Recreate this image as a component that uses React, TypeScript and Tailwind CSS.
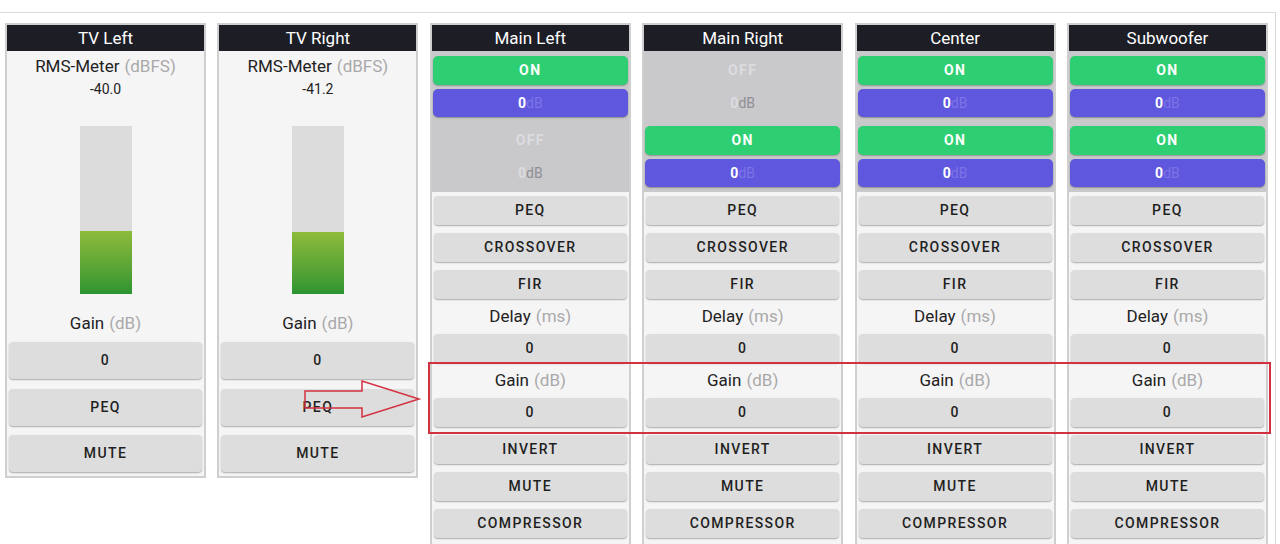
import React from "react";

type Route = { on: boolean };

type Channel = {
  name: string;
  routes: Route[];
};

const MAIN_CHANNELS: Channel[] = [
  { name: "Main Left", routes: [{ on: true }, { on: false }] },
  { name: "Main Right", routes: [{ on: false }, { on: true }] },
  { name: "Center", routes: [{ on: true }, { on: true }] },
  { name: "Subwoofer", routes: [{ on: true }, { on: true }] },
];

const INPUTS = [
  { name: "TV Left", level: "-40.0", fill: 63 },
  { name: "TV Right", level: "-41.2", fill: 62 },
];

const FONT = { fontFamily: "Roboto, 'Noto Sans', sans-serif" };

function Header({ name }: { name: string }) {
  return (
    <div className="flex h-[26px] items-center justify-center bg-[#1d1e25] text-[17px] leading-none text-white">
      {name}
    </div>
  );
}

function Button({ children, tall = false }: { children: React.ReactNode; tall?: boolean }) {
  return (
    <div
      className={`mx-[2px] flex items-center justify-center rounded-[4px] bg-[#dddddd] text-[14px] font-medium uppercase tracking-[0.1em] text-[#1f1f1f] shadow-[0_1px_1.5px_rgba(0,0,0,0.3)] ${
        tall ? "h-[37px]" : "h-[29px]"
      }`}
    >
      {children}
    </div>
  );
}

function Label({ title, unit, className = "" }: { title: string; unit: string; className?: string }) {
  return (
    <div className={`flex items-center justify-center text-[17px] text-[#222] ${className}`}>
      {title}
      <span className="ml-[5px] text-[#a9a9a9]">({unit})</span>
    </div>
  );
}

function RouteBlock({ on }: Route) {
  if (!on) {
    return (
      <div className="flex flex-col gap-[4px]">
        <div className="flex h-[29px] items-center justify-center text-[14px] font-bold tracking-[0.1em] text-[#dcdce0]">
          OFF
        </div>
        <div className="flex h-[28px] items-center justify-center text-[14px]">
          <span className="font-bold text-[#dcdce0]">0</span>
          <span className="text-[#8f8f94]">dB</span>
        </div>
      </div>
    );
  }
  return (
    <div className="flex flex-col gap-[4px]">
      <div className="flex h-[29px] items-center justify-center rounded-[5px] bg-[#2ecf72] text-[14px] font-bold tracking-[0.1em] text-white shadow-[0_1px_1.5px_rgba(0,0,0,0.25)]">
        ON
      </div>
      <div className="flex h-[28px] items-center justify-center rounded-[5px] bg-[#5f57de] text-[14px] shadow-[0_1px_1.5px_rgba(0,0,0,0.3)]">
        <span className="font-bold text-white">0</span>
        <span className="text-[#7b74e6]">dB</span>
      </div>
    </div>
  );
}

function InputPanel({ name, level, fill }: { name: string; level: string; fill: number }) {
  return (
    <div className="w-[201px] self-start border-2 border-[#cfcfcf] bg-[#f6f5f6] pb-[4px]">
      <Header name={name} />
      <Label title="RMS-Meter" unit="dBFS" className="h-[28px] pt-[4px]" />
      <div className="flex h-[20px] items-center justify-center text-[14px] text-[#222]">{level}</div>
      <div className="flex justify-center pt-[27px]">
        <div className="flex h-[168px] w-[52px] flex-col justify-end bg-[#dcdcdc]">
          <div
            className="w-full bg-gradient-to-b from-[#8dbb3c] to-[#2a9431]"
            style={{ height: `${fill}px` }}
          />
        </div>
      </div>
      <Label title="Gain" unit="dB" className="h-[48px] pt-[11px]" />
      <div className="flex flex-col gap-[9.5px]">
        <Button tall>0</Button>
        <Button tall>PEQ</Button>
        <Button tall>MUTE</Button>
      </div>
    </div>
  );
}

function OutputPanel({ channel }: { channel: Channel }) {
  return (
    <div className="w-[201px] border-2 border-b-0 border-[#cfcfcf] bg-[#f6f5f6]">
      <Header name={channel.name} />
      <div className="flex flex-col gap-[9px] bg-[#c9c9cc] px-[1px] pb-[5px] pt-[5px]">
        {channel.routes.map((route, index) => (
          <RouteBlock key={`${channel.name}-${index}`} on={route.on} />
        ))}
      </div>
      <div className="flex flex-col pt-[4px]">
        <div className="flex flex-col gap-[8px]">
          <Button>PEQ</Button>
          <Button>CROSSOVER</Button>
          <Button>FIR</Button>
        </div>
        <Label title="Delay" unit="ms" className="h-[35px]" />
        <Button>0</Button>
        <Label title="Gain" unit="dB" className="h-[35px]" />
        <Button>0</Button>
        <div className="mt-[8px] flex flex-col gap-[8px] pb-[8px]">
          <Button>INVERT</Button>
          <Button>MUTE</Button>
          <Button>COMPRESSOR</Button>
        </div>
      </div>
    </div>
  );
}

export default function App() {
  return (
    <div className="relative h-[544px] w-[1280px] overflow-hidden bg-white" style={FONT}>
      <div className="mt-[12px] w-[1276px] border-r border-t border-[#dadada] pl-[5px] pt-[10px]">
        <div className="flex items-start gap-[11.4px]">
          {INPUTS.map((input) => (
            <InputPanel key={input.name} {...input} />
          ))}
          {MAIN_CHANNELS.map((channel) => (
            <OutputPanel key={channel.name} channel={channel} />
          ))}
        </div>
      </div>

      {/* annotation overlay */}
      <div className="pointer-events-none absolute left-[428px] top-[362px] h-[72px] w-[843px] border-2 border-[#d2313f]" />
      <svg
        className="pointer-events-none absolute left-0 top-0"
        width="1280"
        height="544"
        viewBox="0 0 1280 544"
      >
        <polygon
          points="305,391 362,391 362,381 419,399 362,417 362,408 305,408"
          fill="none"
          stroke="#d2313f"
          strokeWidth="1.5"
        />
      </svg>
    </div>
  );
}
